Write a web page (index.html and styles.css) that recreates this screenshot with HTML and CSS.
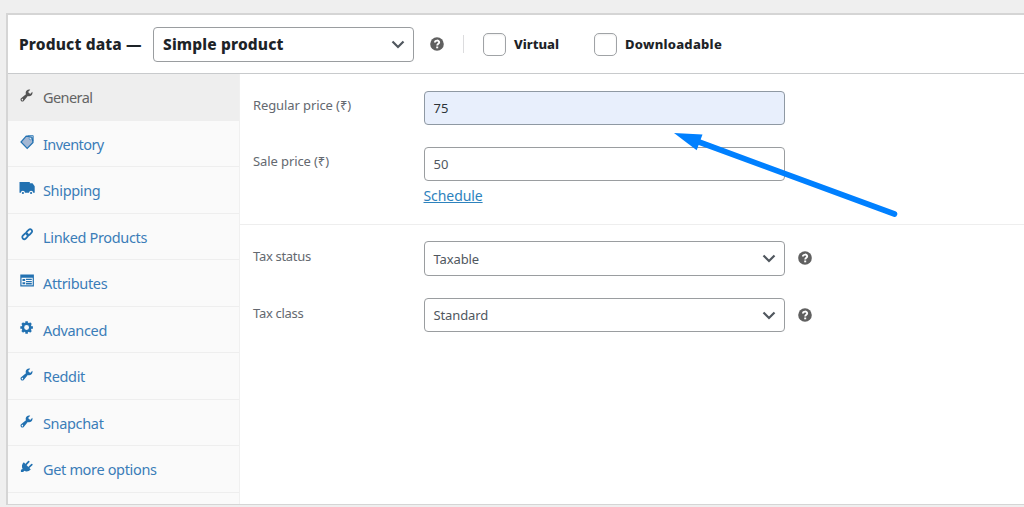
FILE: index.html
```html
<!DOCTYPE html>
<html lang="en">
<head>
<meta charset="utf-8">
<title>Product data</title>
<link rel="stylesheet" href="styles.css">
</head>
<body>
<svg class="defs" width="0" height="0" aria-hidden="true">
  <symbol id="wrench" viewBox="0 0 20 20"><path d="M16.68 9.77c-1.34 1.34-3.3 1.67-4.95.99l-5.41 6.52c-.99.99-2.59.99-3.58 0s-.99-2.59 0-3.57l6.52-5.42c-.68-1.65-.35-3.61.99-4.95 1.28-1.28 3.12-1.62 4.72-1.06l-2.89 2.89 2.82 2.82 2.86-2.87c.53 1.58.18 3.39-1.08 4.65zM3.81 16.21c.4.39 1.04.39 1.43 0 .4-.4.4-1.04 0-1.43-.39-.4-1.03-.4-1.43 0-.39.39-.39 1.03 0 1.43z"/></symbol>
  <symbol id="chevron" viewBox="0 0 14 9"><path d="M1.500 1.500L7 7l5.500-5.500" fill="none" stroke="#50575e" stroke-width="2.200"/></symbol>
  <symbol id="help" viewBox="0 0 14 14"><circle cx="7" cy="7" r="6.800" fill="#606060"/><path d="M4.900 5.600C4.900 2.900 9.200 3 9.200 5.300 9.200 6.900 7.200 6.700 7.200 8.600" fill="none" stroke="#fff" stroke-width="1.900"/><rect x="6.200" y="9.500" width="2" height="1.800" fill="#fff"/></symbol>
</svg>
<main class="panel">
  <header class="head">
    <span class="title">Product data —</span>
    <div class="select type"><span>Simple product</span><svg class="chev"><use href="#chevron"/></svg></div>
    <svg class="help"><use href="#help"/></svg>
    <span class="rule"></span>
    <label class="check"><span class="box"></span><span>Virtual</span></label>
    <label class="check"><span class="box"></span><span class="download">Downloadable</span></label>
  </header>
  <div class="body">
    <nav class="tabs">
      <a class="tab active"><svg class="icon wrench"><use href="#wrench"/></svg><span class="tighter">General</span></a>
      <a class="tab"><svg class="icon" viewBox="0 0 16 16"><path d="M7.200 2.200L13 3.200l1 5.300-5.800 5.800L2 8z" fill="#a3b7d3" stroke="#2271b1" stroke-width="1.200"/><path d="M8.500 1.700h5.700v5.800" fill="none" stroke="#2271b1" stroke-width=".9"/><circle cx="11.300" cy="4.700" r="1.100" fill="#fff" stroke="#2271b1" stroke-width=".6"/></svg><span class="tighter">Inventory</span></a>
      <a class="tab"><svg class="icon" viewBox="0 0 16 16"><path d="M.5 2h10.300v1.300h2.700l2.200 3v6.500H.5z"/><circle cx="3.900" cy="12.800" r="2" fill="#fafafa"/><circle cx="12.100" cy="12.800" r="2" fill="#fafafa"/><circle cx="3.900" cy="13" r="1.100"/><circle cx="12.100" cy="13" r="1.100"/></svg><span>Shipping</span></a>
      <a class="tab"><svg class="icon" viewBox="0 0 16 16"><g fill="none" stroke="#2271b1" stroke-width="1.800"><rect x="-3.300" y="-2" width="6.600" height="4" rx="2" transform="translate(10.200 5.200) rotate(-45)"/><rect x="-3.300" y="-2" width="6.600" height="4" rx="2" transform="translate(6.200 9.200) rotate(-45)"/></g></svg><span>Linked Products</span></a>
      <a class="tab"><svg class="icon" viewBox="0 0 16 16"><path fill-rule="evenodd" d="M1.300 1.500h13.600v12H1.300zM2.500 4.700v7.600h11.200V4.700z"/><path d="M3.500 6h2.700v2H3.500zM3.500 9.200h2.700v2H3.500zM7 5.700h5.800v1.400H7zM7 7.900h5.800v1.300H7zM7 10.100h5.800v1.300H7z"/></svg><span>Attributes</span></a>
      <a class="tab"><svg class="icon" viewBox="0 0 16 16"><circle cx="7.600" cy="7.500" r="3.700" fill="none" stroke="#2271b1" stroke-width="2.500"/><g stroke="#2271b1" stroke-width="2.500"><path d="M7.600 1.200v2M7.600 11.800v2M1.300 7.500h2M11.900 7.500h2M3.200 3.100l1.400 1.400M10.600 10.500l1.400 1.400M3.200 11.900l1.400-1.400M10.600 4.500l1.400-1.400"/></g></svg><span>Advanced</span></a>
      <a class="tab"><svg class="icon wrench"><use href="#wrench"/></svg><span>Reddit</span></a>
      <a class="tab"><svg class="icon wrench"><use href="#wrench"/></svg><span>Snapchat</span></a>
      <a class="tab"><svg class="icon" viewBox="0 0 16 16"><path d="M4.800 3.300l7 7.200c-2.200 2.200-4.700 2.300-6.500 1.300L4.200 13H1.900v-2.300L3.600 10C2.500 7.800 2.700 5.300 4.800 3.300z"/><path d="M6.900 5.600l2.800-3M9.800 8.500l3-2.900" fill="none" stroke="#2271b1" stroke-width="1.700" stroke-linecap="round"/></svg><span>Get more options</span></a>
    </nav>
    <section class="fields">
      <div class="group prices">
        <div class="field"><span class="label">Regular price (₹)</span><div class="input filled">75</div></div>
        <div class="field"><span class="label">Sale price (₹)</span><div><div class="input">50</div><a class="schedule">Schedule</a></div></div>
      </div>
      <div class="group taxes">
        <div class="field"><span class="label">Tax status</span><div class="select"><span>Taxable</span><svg class="chev"><use href="#chevron"/></svg></div><svg class="help"><use href="#help"/></svg></div>
        <div class="field"><span class="label">Tax class</span><div class="select short"><span>Standard</span><svg class="chev"><use href="#chevron"/></svg></div><svg class="help"><use href="#help"/></svg></div>
      </div>
    </section>
  </div>
</main>
<svg class="arrow" viewBox="0 0 230 90"><path d="M29 12L224.500 84" stroke="#0080ff" stroke-width="5.600" stroke-linecap="round"/><path d="M4 3l28.500 1.600-5.800 15.600z" fill="#0080ff"/></svg>
</body>
</html>
```
FILE: styles.css
```css
* { box-sizing: border-box; }
body {
  margin: 0;
  height: 507px;
  padding: 13px 0 0 6px;
  overflow: hidden;
  background: #efefef;
  color: #2c3338;
  font-family: "Noto Sans", "Open Sans", sans-serif;
  font-size: 13px;
  white-space: nowrap;
}
.defs { position: absolute; }
.panel {
  height: 492px;
  border-style: solid;
  border-color: #d5d5d5;
  border-width: 2px 0 1px 2px;
  background: #fff;
}
.head {
  display: flex;
  align-items: center;
  height: 59px;
  padding-left: 11px;
  border-bottom: 1px solid #c8cacc;
  color: #1d2327;
  font-weight: 800;
}
.title { width: 134px; padding-bottom: 1px; font-size: 15.500px; letter-spacing: .15px; }
.select, .input {
  display: flex;
  align-items: center;
  width: 361px;
  height: 35px;
  padding: 0 8px 0 9px;
  border: 1px solid #9a9da0;
  border-radius: 4px;
  background: #fff;
}
.select { justify-content: space-between; }
.input, .short { height: 34px; }
.type { width: 261px; font-size: 15.500px; letter-spacing: .15px; }
.chev { width: 14px; height: 9px; }
.help { width: 14px; height: 14px; margin-left: 13px; flex: none; }
.head .help { margin-left: 16px; }
.rule { width: 1px; height: 18px; margin: 0 19px 0 19px; background: #dcdcde; }
.check { display: flex; align-items: center; gap: 8px; width: 111px; }
.box { flex: none; width: 23px; height: 23px; border: 1px solid #a0a3a6; border-radius: 5px; box-shadow: inset 0 1px 2px #0001; }
.download { letter-spacing: .25px; }
.body { display: flex; height: 430px; }
.tabs { width: 232px; border-right: 1px solid #f0f0f0; background: #fafafa; }
.tab {
  display: flex;
  gap: 8px;
  height: 46.500px;
  padding: 13px 0 0 11px;
  border-bottom: 1px solid #eee;
  color: #3a7db8;
  font-size: 14.500px;
  letter-spacing: -.34px;
  line-height: 21px;
}
.tighter { letter-spacing: -.57px; }
.active { width: 231px; background: #eee; color: #646464; }
.icon { width: 16px; height: 16px; fill: #2271b1; flex: none; }
.wrench { padding: 1px 1px 0 0; }
.active .icon { fill: #555; }
.fields { flex: 1; color: #646970; }
.group { display: flex; flex-direction: column; padding-left: 13px; }
.prices { height: 151px; padding-top: 17px; gap: 22px; border-bottom: 1px solid #eee; }
.taxes { padding-top: 16px; gap: 22px; letter-spacing: -.12px; }
.field { display: flex; }
.label { width: 170.500px; padding-top: 5px; line-height: 18px; letter-spacing: -.1px; }
.taxes .label { padding-top: 6px; letter-spacing: -.3px; }
.input { color: #50575e; }
.filled { border-color: #8f99a3; background: #e8effc; color: #2c3338; }
.schedule { display: block; width: max-content; margin-top: 6px; color: #2d82bd; font-size: 14px; letter-spacing: -.08px; line-height: 18px; text-decoration: underline; }
.field .select { color: #50575e; }
.field .help { margin-top: 10px; }
.arrow { position: absolute; left: 670px; top: 130px; width: 230px; height: 90px; }
```
